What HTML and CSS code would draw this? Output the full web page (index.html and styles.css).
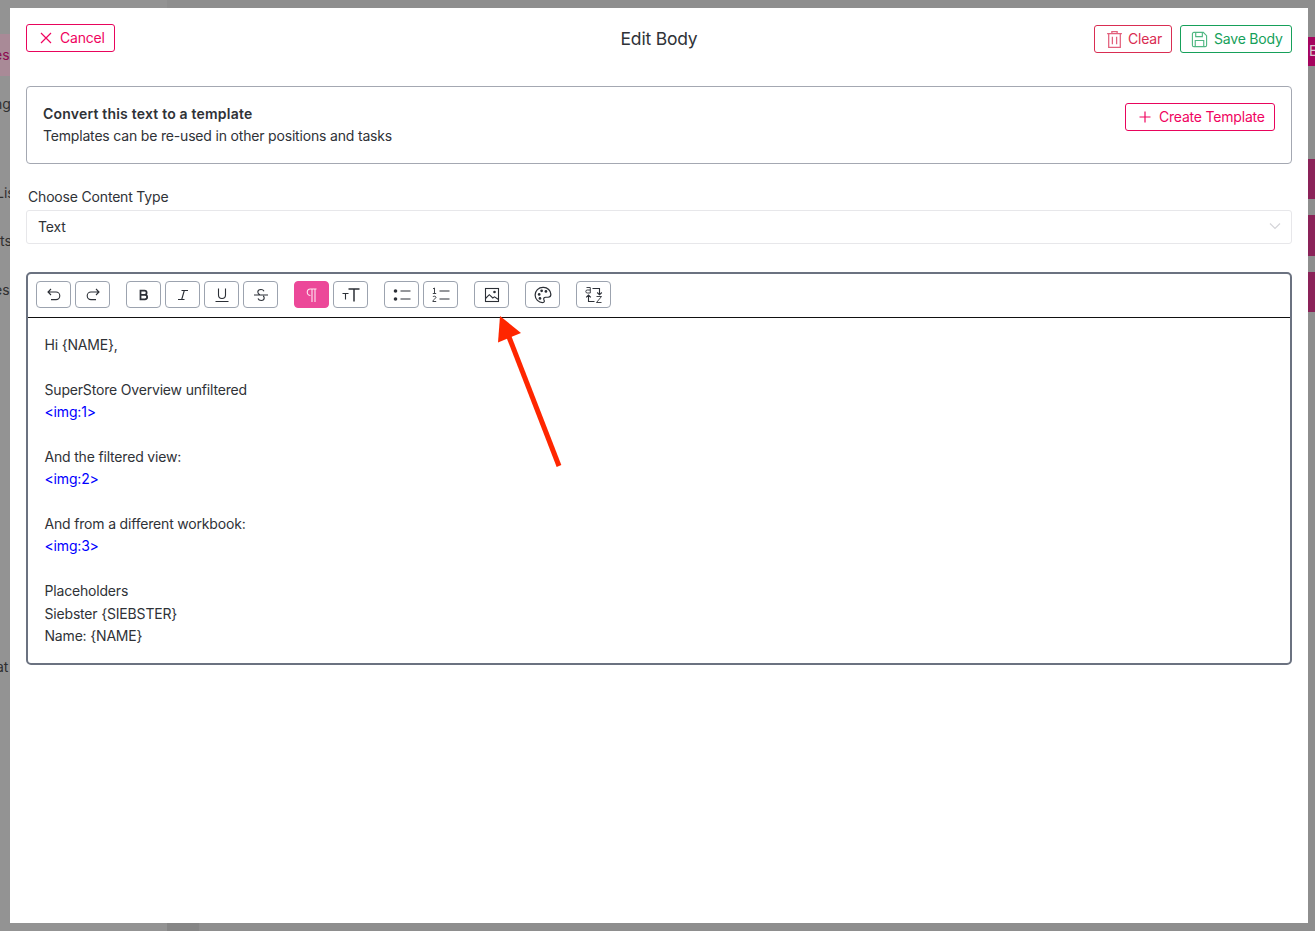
FILE: index.html
```html
<!DOCTYPE html>
<html lang="en">
<head>
<meta charset="utf-8">
<title>Edit Body</title>
<link rel="stylesheet" href="styles.css">
</head>
<body>
<div class="backdrop" aria-hidden="true">
  <div class="bg-col"></div>
  <div class="bg-foot"></div>
  <div class="bg-pill"></div>
  <span class="bg-t t1">es</span>
  <span class="bg-t t2">ng</span>
  <span class="bg-t t3">Lis</span>
  <span class="bg-t t4">ts</span>
  <span class="bg-t t5">es</span>
  <span class="bg-t t6">at</span>
  <div class="bg-bar b1">E</div>
  <div class="bg-bar b2"></div>
  <div class="bg-bar b3"></div>
  <div class="bg-bar b4"></div>
</div>
<main class="modal">
  <header class="head">
    <button class="btn btn-pink btn-cancel">
      <svg class="ic" viewBox="0 0 14 14"><path d="M2 2l10 10M12 2L2 12"/></svg>
      <span>Cancel</span>
    </button>
    <h1 class="title">Edit Body</h1>
    <div class="head-right">
      <button class="btn btn-red">
        <svg class="ic-l" viewBox="0 0 16 18"><path d="M1 3.500h14M5.500 3.500V1.500h5v2M2.500 3.500v13h11v-13M6 6.500v7M10 6.500v7"/></svg>
        <span>Clear</span>
      </button>
      <button class="btn btn-green">
        <svg class="ic-l" viewBox="0 0 18 18"><path d="M1.500 3a1.500 1.500 0 0 1 1.500-1.500h10l3.500 3.500v10a1.500 1.500 0 0 1-1.500 1.500H3A1.500 1.500 0 0 1 1.500 15zM5 1.500v4.500h7V1.500M4.500 16.500v-6.500h9v6.500"/></svg>
        <span>Save Body</span>
      </button>
    </div>
  </header>

  <section class="tpl">
    <div class="tpl-text">
      <div class="tpl-h">Convert this text to a template</div>
      <div class="tpl-p">Templates can be re-used in other positions and tasks</div>
    </div>
    <button class="btn btn-pink btn-create">
      <svg class="ic" viewBox="0 0 14 14"><path d="M7 1.500v11M1.500 7h11"/></svg>
      <span>Create Template</span>
    </button>
  </section>

  <label class="lbl">Choose Content Type</label>
  <div class="select">
    <span>Text</span>
    <svg class="chev" viewBox="0 0 12 8"><path d="M1 1.500l5 5 5-5"/></svg>
  </div>

  <section class="editor">
    <div class="toolbar">
      <div class="grp g1">
        <button class="tb"><svg viewBox="0 0 16 16"><path d="M5 2L2 5l3 3M2 5h8a3.800 3.800 0 0 1 0 7.600H5"/></svg></button>
        <button class="tb"><svg viewBox="0 0 16 16"><path d="M11 2l3 3-3 3M14 5H6a3.800 3.800 0 0 0 0 7.600h5"/></svg></button>
      </div>
      <div class="grp g2">
        <button class="tb"><svg class="sm" viewBox="0 0 16 16"><path class="thick" d="M4 3h4.600a2.400 2.400 0 0 1 0 4.800H4zM4 7.800h5a2.600 2.600 0 0 1 0 5.200H4z"/></svg></button>
        <button class="tb"><svg viewBox="0 0 16 16"><path d="M6.500 3.500H13M3 12.500h6.500M9.300 3.500L6.700 12.500"/></svg></button>
        <button class="tb"><svg viewBox="0 0 16 16"><path d="M4.500 1.500v6.500a3.500 3.500 0 0 0 7 0V1.500M1.500 14.500h13"/></svg></button>
        <button class="tb"><svg viewBox="0 0 16 16"><path d="M1 8h14M11 4.200C10.400 3 9.200 2.500 8 2.500c-1.800 0-3.200 1-3.200 2.600 0 1 .6 2 2 2.600M5 11.500c.5 1.300 1.700 2 3.200 2 1.800 0 3-1 3-2.500 0-.8-.3-1.500-1-2"/></svg></button>
      </div>
      <div class="grp g3">
        <button class="tb tb-on"><svg viewBox="0 0 16 16"><path d="M6.500 8.500a3 3 0 0 1 0-6.500H12.500M8 2v13M11 2v13"/></svg></button>
        <button class="tb"><svg class="wide" viewBox="0 0 18 16"><path class="heavy" d="M6.500 2h11M12 2v12.500"/><path d="M.500 6.500h6M3.500 6.500v6"/></svg></button>
      </div>
      <div class="grp g4">
        <button class="tb"><svg class="wide" viewBox="0 0 18 16"><circle class="fill" cx="2.500" cy="4" r="1.800"/><circle class="fill" cx="2.500" cy="12" r="1.800"/><path d="M7.500 4h10M7.500 12h10"/></svg></button>
        <button class="tb"><svg class="wide" viewBox="0 0 18 16"><path class="fine" d="M1 1.800l1.500-.8v5.500M.8 6.500h3.400M.8 10c.3-1.100 3.200-1.100 3.200.4 0 1.200-3.200 2.100-3.200 4.100h3.400"/><path d="M7.500 4h10M7.500 12h10"/></svg></button>
      </div>
      <div class="grp g5">
        <button class="tb"><svg viewBox="0 0 16 16"><rect x="1.500" y="1.500" width="13" height="13"/><circle class="fill" cx="10.500" cy="5" r="1.300"/><path d="M1.500 11.500l3.800-3.800 3.500 3.300 1.700-1.200 4 2.700"/></svg></button>
      </div>
      <div class="grp g6">
        <button class="tb"><svg class="big" viewBox="0 0 16 16"><path d="M8 1.200C4 1.200 1 4.300 1 8c0 3.700 3.200 6.800 6.500 6.800 2 0 1.900-1.500 1.300-2.600-.6-1.200.3-2.200 1.500-2.200h2.200c1.500 0 2.500-1 2.500-2.600 0-3.200-3-6.200-6.500-6.200z"/><circle class="fill" cx="4.600" cy="7.500" r="1.200"/><circle class="fill" cx="6.800" cy="4.300" r="1.200"/><circle class="fill" cx="10.600" cy="4.800" r="1.200"/><circle class="fill" cx="5.300" cy="11" r="1.200"/></svg></button>
      </div>
      <div class="grp g7">
        <button class="tb"><svg class="big" viewBox="0 0 18 18"><path class="fine" d="M1.500 1.500h3.800v5.500H2.300a1.400 1.400 0 0 1 0-3h3M11.500 10.500h5L11.500 16.500h5"/><path d="M7.500 2.500H14.500v6M12.200 6.500l2.300 2.300 2.300-2.300M9.500 15.500H3.500v-6.500M5.800 11.300L3.500 9 1.200 11.300"/></svg></button>
      </div>
    </div>
    <div class="content">
      <p>Hi {NAME},</p>
      <p class="blank">&nbsp;</p>
      <p>SuperStore Overview unfiltered</p>
      <p class="img">&lt;img:1&gt;</p>
      <p class="blank">&nbsp;</p>
      <p>And the filtered view:</p>
      <p class="img">&lt;img:2&gt;</p>
      <p class="blank">&nbsp;</p>
      <p>And from a different workbook:</p>
      <p class="img">&lt;img:3&gt;</p>
      <p class="blank">&nbsp;</p>
      <p>Placeholders</p>
      <p>Siebster {SIEBSTER}</p>
      <p>Name: {NAME}</p>
    </div>
    <svg class="arrow" viewBox="0 0 100 170"><path class="arrow-line" d="M79 157L29 28"/><path class="arrow-head" d="M20 7L41 24L18 33.500Z"/></svg>
  </section>
</main>
</body>
</html>
```
FILE: styles.css
```css
* { box-sizing: border-box; }
html, body { margin: 0; height: 100%; }
body {
  width: 1315px;
  height: 931px;
  overflow: hidden;
  background: #8e8e8e;
  padding: 8px 7px 8px 10px;
  font-family: Inter, "Liberation Sans", sans-serif;
  font-size: 14px;
  letter-spacing: -0.18px;
  color: #2f3237;
  position: relative;
}
.backdrop { position: absolute; inset: 0; overflow: hidden; }
.bg-col { position: absolute; left: 0; top: 0; width: 167px; height: 931px; background: #939393; }
.bg-foot { position: absolute; left: 167px; top: 923px; width: 32px; height: 8px; background: #868686; }
.bg-pill { position: absolute; left: 0; top: 34px; width: 10px; height: 42px; background: #a98a97; }
.bg-t { position: absolute; color: #303030; font-size: 14px; line-height: 18px; white-space: nowrap; letter-spacing: 0; }
.t1 { left: -6px; top: 46px; color: #8c0a50; width: 16px; overflow: hidden; }
.t2 { left: -6px; top: 95px; width: 16px; overflow: hidden; }
.t3 { left: -4px; top: 184px; width: 14px; overflow: hidden; }
.t4 { left: 0; top: 232px; width: 10px; overflow: hidden; }
.t5 { left: -6px; top: 281px; width: 16px; overflow: hidden; }
.t6 { left: -4px; top: 658px; width: 14px; overflow: hidden; }
.bg-bar { position: absolute; left: 1308px; width: 7px; background: #8a2258; overflow: hidden; }
.b1 { top: 37px; height: 29px; background: #a5045e; color: #d6c4cc; font-size: 14px; line-height: 27px; padding-left: 1px; }
.b2 { top: 159px; height: 40px; }
.b3 { top: 215px; height: 41px; }
.b4 { top: 272px; height: 40px; }

.modal {
  position: relative;
  width: 1298px;
  height: 915px;
  background: #fff;
  padding: 16px 16px 0;
}
.head {
  display: flex;
  justify-content: space-between;
  align-items: flex-start;
  height: 62px;
  position: relative;
}
.title {
  position: absolute;
  left: 0;
  right: 0;
  top: 4px;
  margin: 0;
  text-align: center;
  font-size: 17.500px;
  font-weight: 400;
  line-height: 22px;
  color: #2f3237;
  letter-spacing: -0.2px;
  pointer-events: none;
}
.head-right { display: flex; gap: 8px; margin-top: 1px; }
.btn {
  display: flex;
  align-items: center;
  height: 28px;
  padding: 0;
  background: #fff;
  border: 1px solid;
  border-radius: 3px;
  font: 400 14px/18px Inter, "Liberation Sans", sans-serif;
  letter-spacing: -0.2px;
  white-space: nowrap;
}
.btn-pink { color: #f0045f; border-color: #e8045c; }
.btn-cancel { width: 89px; padding-left: 12px; gap: 7px; }
.btn-create { width: 150px; padding-left: 12px; gap: 7px; flex: none; }
.btn-red { color: #d92d52; border-color: #d92d52; width: 78px; padding-left: 11px; gap: 5px; }
.btn-green { color: #16a05a; border-color: #16a05a; width: 112px; padding-left: 10px; gap: 6px; }
.ic { width: 14px; height: 14px; fill: none; stroke: currentColor; stroke-width: 1.200; }
.ic-l { width: 17px; height: 19px; fill: none; stroke: currentColor; stroke-width: 1.200; opacity: .75; }

.tpl {
  display: flex;
  justify-content: space-between;
  align-items: flex-start;
  height: 78px;
  border: 1px solid #a4a8b2;
  border-radius: 4px;
  padding: 16px 16px 0;
}
.tpl-h { font-weight: 600; line-height: 22px; letter-spacing: 0.2px; }
.tpl-p { line-height: 22px; }

.lbl { display: block; margin: 23px 0 0 2px; line-height: 20px; font-size: 14px; }
.select {
  display: flex;
  justify-content: space-between;
  align-items: center;
  height: 34px;
  margin-top: 3px;
  padding: 0 10px 2px 11px;
  border: 1px solid #e7e7ea;
  border-radius: 3px;
}
.chev { width: 12px; height: 8px; fill: none; stroke: #d4d4d8; stroke-width: 1.200; }

.editor {
  position: relative;
  margin-top: 28px;
  height: 393px;
  border: 2px solid #6b7280;
  border-radius: 5px;
}
.toolbar {
  display: flex;
  align-items: flex-start;
  height: 44px;
  padding: 7px 0 0 8px;
  border-bottom: 1px solid #111;
}
.grp { display: flex; gap: 4px; margin-left: 16px; }
.g1 { margin-left: 0; }
.tb {
  display: flex;
  align-items: center;
  justify-content: center;
  width: 35px;
  height: 27px;
  padding: 0;
  background: #fff;
  border: 1px solid #9ca3af;
  border-radius: 4px;
}
.tb svg { width: 16px; height: 16px; fill: none; stroke: #2b2f36; stroke-width: 1.100; }
.tb svg.sm { width: 14px; height: 14px; }
.tb svg.wide { width: 18px; height: 16px; }
.tb svg.big { width: 18px; height: 18px; }
.tb svg .fill { fill: #2b2f36; stroke: none; }
.tb svg .thick { stroke-width: 2; }
.tb svg .heavy { stroke-width: 1.500; }
.tb svg .fine { stroke-width: .9; }
.tb-on { background: #ec4899; border-color: #ec4899; }
.tb-on svg { stroke: #fde7f1; }
.content { padding: 15.800px 16.500px 0; }
.content p { margin: 0; line-height: 22.400px; font-size: 14px; }
.img { color: #0000ff; }
.arrow {
  position: absolute;
  left: 452px;
  top: 35px;
  width: 100px;
  height: 170px;
  overflow: visible;
  pointer-events: none;
}
.arrow-line { fill: none; stroke: #ff2600; stroke-width: 5; }
.arrow-head { fill: #ff2600; }
```
